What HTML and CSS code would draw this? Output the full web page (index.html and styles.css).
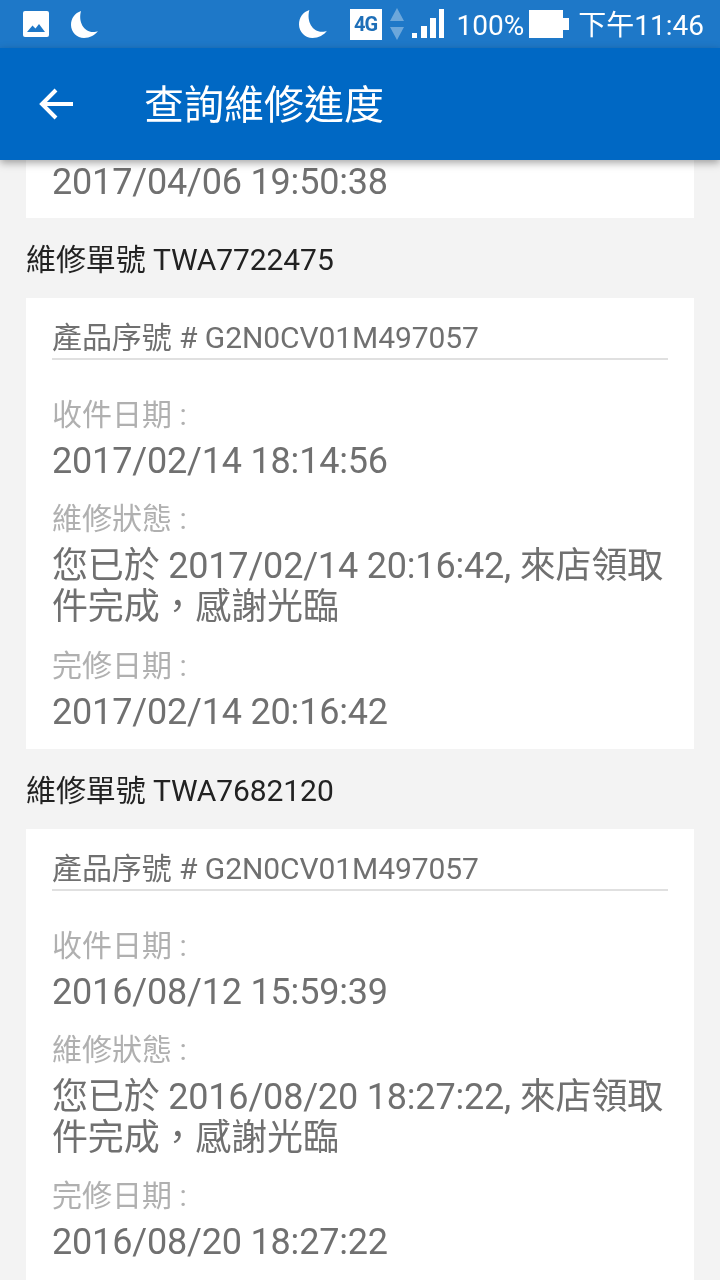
FILE: index.html
```html
<!DOCTYPE html>
<html>
<head>
<meta http-equiv="Content-Type" content="text/html; charset=utf-8" />
<title>查詢維修進度</title>
<link rel="stylesheet" href="styles.css">
</head>

<body>
<div class="status">
	<svg class="ic-pic" width="26" height="26" viewBox="0 0 26 26"><path fill="#fff" d="M2 0h22a2 2 0 0 1 2 2v22a2 2 0 0 1-2 2H2a2 2 0 0 1-2-2V2a2 2 0 0 1 2-2z"/><path fill="#1e78c8" d="M4 21l5.500-6.500 3 3 3.500-4.500 6 8z"/></svg>
	<svg class="ic-moon" width="27" height="27" viewBox="0 0 27 27"><path fill="#fff" d="M10 0C4 2 0 7 0 14c0 7 6 13 13 13 6 0 11-3 14-7-1 .6-3 1-5 1C13 21 7 11 10 0z"/></svg>
	<div class="status-fill"></div>
	<svg class="ic-moon2" width="28" height="28" viewBox="0 0 27 27"><path fill="#fff" d="M10 0C4 2 0 7 0 14c0 7 6 13 13 13 6 0 11-3 14-7-1 .6-3 1-5 1C13 21 7 11 10 0z"/></svg>
	<span class="net">4G</span>
	<svg class="ic-arrows" width="14" height="32" viewBox="0 0 14 32"><path fill="#fff" opacity="0.35" d="M7 0l7 13H0z"/><path fill="#fff" opacity="0.35" d="M0 19h14L7 32z"/></svg>
	<svg class="ic-signal" width="32" height="30" viewBox="0 0 32 30"><path fill="#fff" d="M0 24h5v5H0zM9 17h6v12H9zM18 9h6v20h-6zM27 0h5v29h-5z"/></svg>
	<span class="pct">100%</span>
	<svg class="ic-batt" width="40" height="28" viewBox="0 0 40 28"><path fill="#fff" d="M0 0h34v8h6v12h-6v8H0z"/></svg>
	<span class="clock">下午11:46</span>
</div>
<div class="bar">
	<svg class="ic-back" width="34" height="32" viewBox="0 0 34 32"><path fill="none" stroke="#fff" stroke-width="4" d="M34 16H4M17 2L3 16l14 14"/></svg>
	<h1>查詢維修進度</h1>
</div>

<div class="list">
	<div class="card card-cut">
		<div class="val">2017/04/06 19:50:38</div>
	</div>

	<h2>維修單號 TWA7722475</h2>
	<div class="card">
		<div class="sn">產品序號 # G2N0CV01M497057</div>
		<div class="lab first">收件日期 :</div>
		<div class="val">2017/02/14 18:14:56</div>
		<div class="lab">維修狀態 :</div>
		<div class="val multi">您已於 2017/02/14 20:16:42, 來店領取件完成，感謝光臨</div>
		<div class="lab">完修日期 :</div>
		<div class="val">2017/02/14 20:16:42</div>
	</div>

	<h2>維修單號 TWA7682120</h2>
	<div class="card">
		<div class="sn">產品序號 # G2N0CV01M497057</div>
		<div class="lab first">收件日期 :</div>
		<div class="val">2016/08/12 15:59:39</div>
		<div class="lab">維修狀態 :</div>
		<div class="val multi">您已於 2016/08/20 18:27:22, 來店領取件完成，感謝光臨</div>
		<div class="lab">完修日期 :</div>
		<div class="val">2016/08/20 18:27:22</div>
	</div>
</div>
</body>
</html>
```
FILE: styles.css
```css
*{ margin:0; padding:0; box-sizing:border-box;}
html,body{ height:1280px; overflow:hidden;}
body{ background:#f3f3f3; font-family:Roboto,"Noto Sans CJK TC",sans-serif; color:#707070;}

.status{ height:48px; background:#1e78c8; display:flex; align-items:center; color:#fff; padding-left:23px; will-change:transform;}
.status-fill{ flex:1;}
.ic-moon{ margin-left:22px;}
.net{ width:32px; height:31px; margin-left:23px; background:#fff; color:#1e6fb8; font-size:20px; font-weight:700; line-height:31px; text-align:center; letter-spacing:-1px;}
.ic-arrows{ margin-left:8px;}
.ic-signal{ margin-left:8px;}
.pct{ margin-left:13px; font-size:28px; line-height:48px; padding-top:3px;}
.ic-batt{ margin-left:5px;}
.clock{ margin-left:9px; margin-right:16px; font-size:28px; line-height:48px; padding-top:3px;}

.bar{ height:112px; background:#0068c4; display:flex; align-items:center; position:relative; z-index:1; box-shadow:0 3px 8px rgba(0,0,0,0.35); will-change:transform;}
.ic-back{ margin-left:39px;}
.bar h1{ margin-left:71px; padding-top:3px; font-size:40px; font-weight:400; color:#fff; line-height:112px;}

.list{ padding:0 26px; will-change:transform;}
.card{ background:#fff; padding:20px 26px 14.17px;}
.card:last-child{ padding-bottom:40px;}
.card-cut{ padding:0 26px 13px; margin-top:-1px;}
h2{ font-size:30px; font-weight:400; color:#222; line-height:40px; padding:22px 0 18px; letter-spacing:-0.1px;}
.sn{ font-size:30px; line-height:40px; height:42px; border-bottom:2px solid #e0e0e0; letter-spacing:-0.08px; color:#707070;}
.lab{ font-size:30px; line-height:42px; color:#b0b0b0; margin-top:14px;}
.lab.first{ margin-top:34px;}
.val{ font-size:36px; line-height:46px; margin-top:2px; color:#707070; letter-spacing:-0.18px;}
.card-cut .val{ margin-top:0;}
.val.multi{ line-height:41px; margin-top:6px; margin-bottom:16.5px;}
.val.multi + .lab{ margin-top:0;}
```
